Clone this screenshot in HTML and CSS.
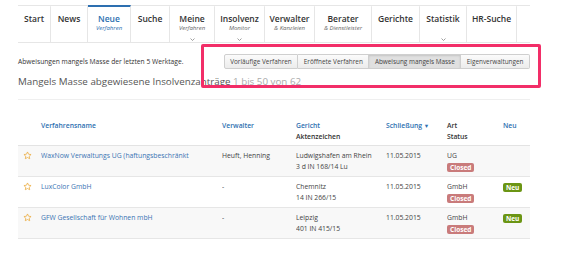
FILE: index.html
```html
<!DOCTYPE html>
<html lang="de">
<head>
<meta charset="utf-8">
<link rel="stylesheet" href="styles.css">
</head>
<body>
<div class="page">
  <nav class="nav">
    <a class="nav-item"><span class="lbl">Start</span></a>
    <a class="nav-item"><span class="lbl">News</span></a>
    <a class="nav-item active"><span class="lbl">Neue</span><span class="sub">Verfahren</span></a>
    <a class="nav-item"><span class="lbl">Suche</span></a>
    <a class="nav-item"><span class="lbl">Meine</span><span class="sub">Verfahren</span><span class="chev"><svg width="5" height="3" viewBox="0 0 5 3"><path d="M0.5 0.5 L2.5 2.5 L4.5 0.5" fill="none" stroke="#888" stroke-width="0.8"/></svg></span></a>
    <a class="nav-item"><span class="lbl">Insolvenz</span><span class="sub">Monitor</span><span class="chev"><svg width="5" height="3" viewBox="0 0 5 3"><path d="M0.5 0.5 L2.5 2.5 L4.5 0.5" fill="none" stroke="#888" stroke-width="0.8"/></svg></span></a>
    <a class="nav-item"><span class="lbl">Verwalter</span><span class="sub">&amp; Kanzleien</span></a>
    <a class="nav-item"><span class="lbl">Berater</span><span class="sub">&amp; Dienstleister</span></a>
    <a class="nav-item"><span class="lbl">Gerichte</span></a>
    <a class="nav-item"><span class="lbl">Statistik</span><span class="sub">&nbsp;</span><span class="chev"><svg width="5" height="3" viewBox="0 0 5 3"><path d="M0.5 0.5 L2.5 2.5 L4.5 0.5" fill="none" stroke="#888" stroke-width="0.8"/></svg></span></a>
    <a class="nav-item"><span class="lbl">HR-Suche</span></a>
    <span class="nav-rest"></span>
  </nav>

  <div class="toolbar">
    <p class="intro">Abweisungen mangels Masse der letzten 5 Werktage.</p>
    <div class="btn-group">
      <button class="btn">Vorläufige Verfahren</button>
      <button class="btn">Eröffnete Verfahren</button>
      <button class="btn on">Abweisung mangels Masse</button>
      <button class="btn">Eigenverwaltungen</button>
    </div>
  </div>

  <h1 class="title">Mangels Masse abgewiesene Insolvenzanträge <span class="count">1 bis 50 von 62</span></h1>
  <hr class="rule">

  <table class="list">
    <colgroup>
      <col class="c-star"><col class="c-name"><col class="c-verw"><col class="c-ger"><col class="c-date"><col class="c-art"><col class="c-neu">
    </colgroup>
    <thead>
      <tr>
        <th></th>
        <th class="lnk">Verfahrensname</th>
        <th class="lnk">Verwalter</th>
        <th><span class="lnk">Gericht</span><br>Aktenzeichen</th>
        <th class="lnk">Schließung <span class="tri">▼</span></th>
        <th>Art<br>Status</th>
        <th class="lnk">Neu</th>
      </tr>
    </thead>
    <tbody>
      <tr class="odd">
        <td class="star"><svg width="9" height="9" viewBox="0 0 24 24"><path d="M12 2.5l2.9 6.1 6.6.8-4.9 4.6 1.3 6.6L12 17.3l-5.9 3.3 1.3-6.6-4.9-4.6 6.6-.8z" fill="none" stroke="#eba93a" stroke-width="2" stroke-linejoin="round"/></svg></td>
        <td class="lnk-n">WaxNow Verwaltungs UG (haftungsbeschränkt</td>
        <td>Heuft, Henning</td>
        <td>Ludwigshafen am Rhein<br>3 d IN 168/14 Lu</td>
        <td>11.05.2015</td>
        <td>UG<br><span class="badge closed">Closed</span></td>
        <td></td>
      </tr>
      <tr>
        <td class="star"><svg width="9" height="9" viewBox="0 0 24 24"><path d="M12 2.5l2.9 6.1 6.6.8-4.9 4.6 1.3 6.6L12 17.3l-5.9 3.3 1.3-6.6-4.9-4.6 6.6-.8z" fill="none" stroke="#eba93a" stroke-width="2" stroke-linejoin="round"/></svg></td>
        <td class="lnk-n">LuxColor GmbH</td>
        <td>-</td>
        <td>Chemnitz<br>14 IN 266/15</td>
        <td>11.05.2015</td>
        <td>GmbH<br><span class="badge closed">Closed</span></td>
        <td><span class="badge neu">Neu</span></td>
      </tr>
      <tr class="odd">
        <td class="star"><svg width="9" height="9" viewBox="0 0 24 24"><path d="M12 2.5l2.9 6.1 6.6.8-4.9 4.6 1.3 6.6L12 17.3l-5.9 3.3 1.3-6.6-4.9-4.6 6.6-.8z" fill="none" stroke="#eba93a" stroke-width="2" stroke-linejoin="round"/></svg></td>
        <td class="lnk-n">GFW Gesellschaft für Wohnen mbH</td>
        <td>-</td>
        <td>Leipzig<br>401 IN 415/15</td>
        <td>11.05.2015</td>
        <td>GmbH<br><span class="badge closed">Closed</span></td>
        <td><span class="badge neu">Neu</span></td>
      </tr>
    </tbody>
  </table>

  <div class="highlight"></div>
</div>
</body>
</html>
```

FILE: styles.css
```css
* { box-sizing: border-box; }
html, body { margin: 0; padding: 0; background: #fff; }
body {
  font-family: "Open Sans", "Liberation Sans", sans-serif;
  color: #444;
  width: 564px;
  height: 258px;
  overflow: hidden;
}
.page {
  width: 530px;
  padding-left: 18px;
}

/* Navigation */
.nav {
  margin-top: 5px;
  display: grid;
  grid-template-columns: 33px 37px 43px 39px 45px 50px 50px 57px 48px 47px 50px 1fr;
  border-top: 1px solid #e6e6e6;
  border-bottom: 1px solid #e6e6e6;
  height: 38px;
}
.nav-item {
  display: flex;
  flex-direction: column;
  align-items: center;
  border-right: 1px solid #e6e6e6;
  padding-top: 7px;
  color: #333;
  text-decoration: none;
  border-top: 2px solid transparent;
  margin-top: -1px;
}
.nav-item .lbl {
  font-size: 8.5px;
  font-weight: 600;
  line-height: 10px;
  white-space: nowrap;
}
.nav-item .sub {
  font-size: 6px;
  font-style: italic;
  line-height: 8px;
  color: #666;
  white-space: nowrap;
}
.nav-item .chev {
  line-height: 0;
  margin-top: 3px;
}
.nav-item.active {
  border-top-color: #2d6fb0;
}
.nav-item.active .lbl,
.nav-item.active .sub { color: #2d6fb0; }

/* Toolbar */
.toolbar {
  display: flex;
  justify-content: space-between;
  align-items: center;
  margin-top: 11px;
  height: 15px;
}
.intro {
  margin: 0;
  font-size: 6.7px;
  color: #333;
}
.btn-group {
  display: flex;
}
.btn {
  font-family: inherit;
  font-size: 6.4px;
  color: #444;
  height: 15px;
  padding: 0 5.5px;
  border: 1px solid #cfcfcf;
  border-left-width: 0;
  background: linear-gradient(#fbfbfb, #ececec);
  margin: 0;
  line-height: 13px;
}
.btn:first-child { border-left-width: 1px; border-radius: 2px 0 0 2px; }
.btn:last-child { border-radius: 0 2px 2px 0; }
.btn.on {
  background: #e0e0e0;
  box-shadow: inset 0 1px 2px rgba(0,0,0,0.12);
}

/* Title */
.title {
  margin: 6px 0 0;
  font-size: 9.8px;
  font-weight: 400;
  line-height: 14px;
  color: #555;
}
.title .count { color: #aaa; }
.rule {
  margin: 10px 0 0;
  border: 0;
  border-top: 1px solid #efefef;
  height: 0;
}

/* Table */
.list {
  width: 512px;
  table-layout: fixed;
  border-collapse: collapse;
  margin-top: 15px;
  font-size: 6.8px;
}
.c-star { width: 23px; }
.c-name { width: 181px; }
.c-verw { width: 74px; }
.c-ger { width: 90px; }
.c-date { width: 61px; }
.c-art { width: 56px; }
.c-neu { width: 27px; }
.list th {
  text-align: left;
  vertical-align: top;
  font-weight: 600;
  color: #333;
  line-height: 11px;
  padding: 5px 0 3px;
  border-bottom: 1px solid #e3e3e3;
}
.list .lnk { color: #2d6fb0; }
.tri { font-size: 5.5px; }
.list td {
  vertical-align: top;
  line-height: 11px;
  padding: 4px 0 4px;
  border-bottom: 1px solid #e6e6e6;
  color: #444;
  white-space: nowrap;
  overflow: hidden;
}
.list tr.odd td { background: #f8f8f8; }
.list td.star {
  padding-left: 5px;
  padding-top: 5px;
  line-height: 0;
}
.lnk-n { color: #3a74b3 !important; }
.badge {
  display: inline-block;
  font-weight: 700;
  color: #fff;
  font-size: 6.5px;
  line-height: 9px;
  padding: 0 3px;
  border-radius: 2px;
  vertical-align: middle;
}
.badge.closed { background: #c97b7b; }
.badge.neu { background: #6b9514; margin-top: 1px; }

/* Annotation overlay */
.highlight {
  position: absolute;
  left: 201px;
  top: 44px;
  width: 340px;
  height: 44px;
  border: 3px solid #f22e68;
  border-radius: 2px;
  pointer-events: none;
}
```
